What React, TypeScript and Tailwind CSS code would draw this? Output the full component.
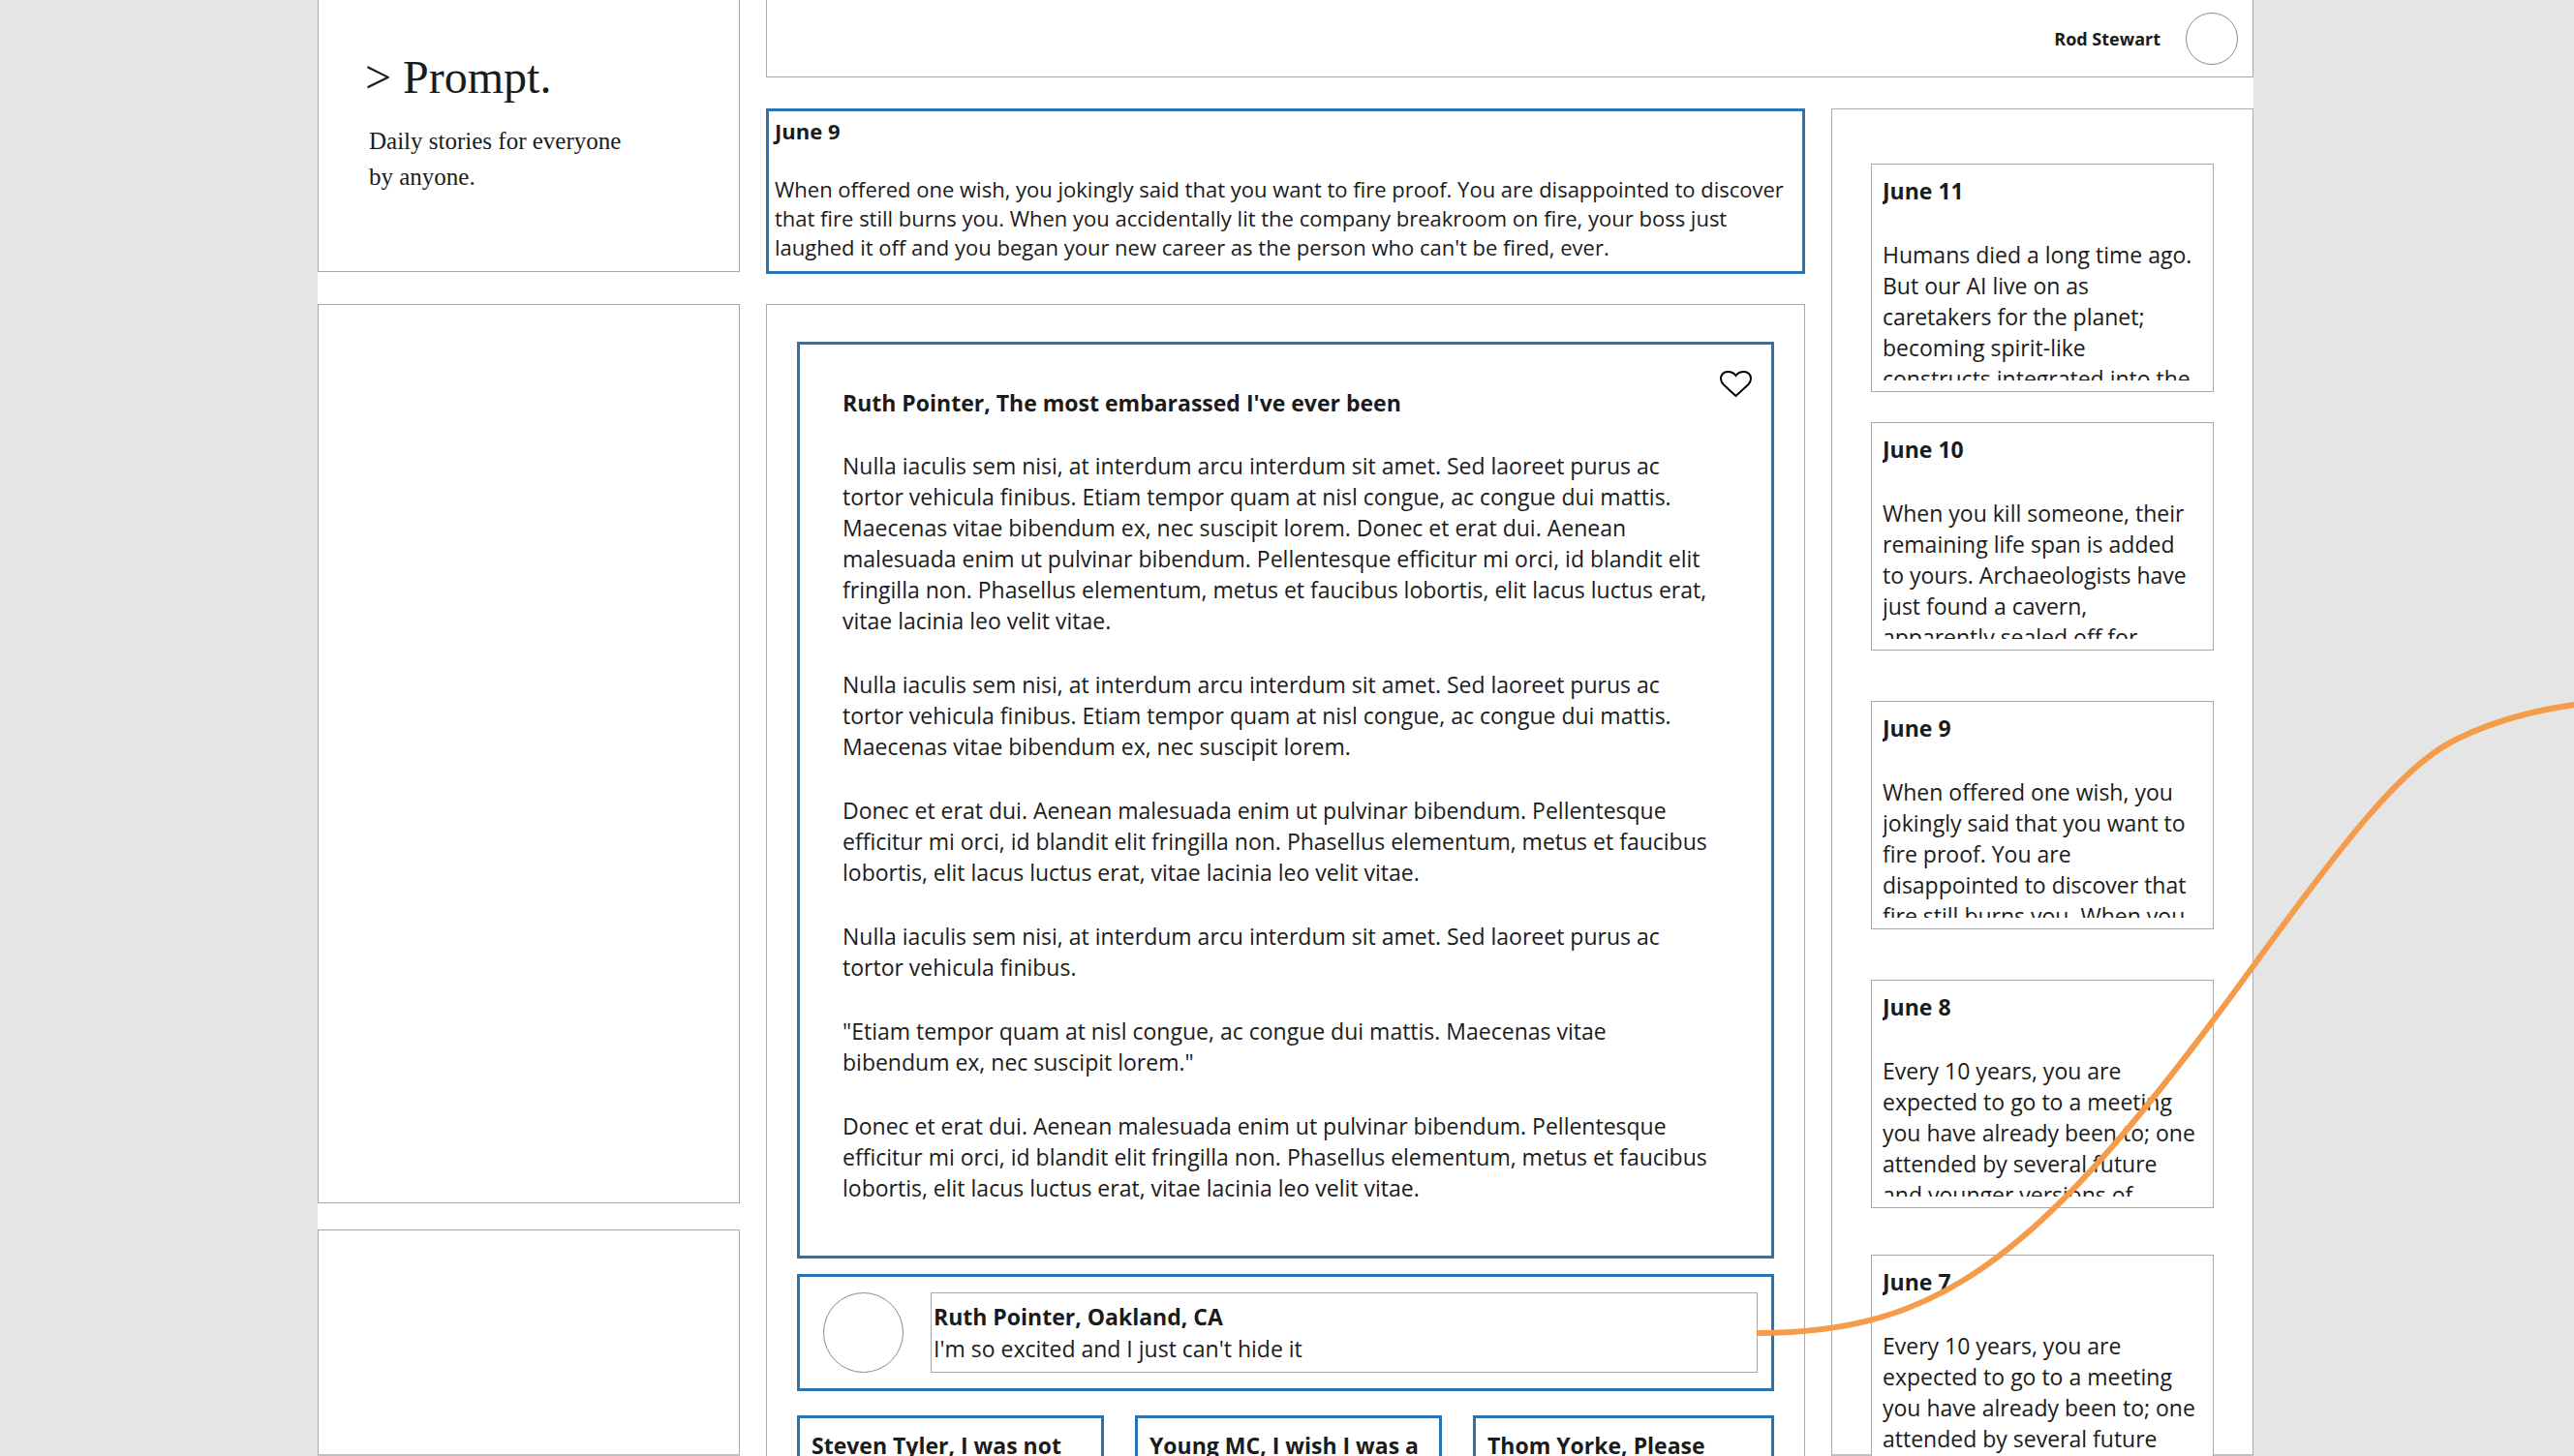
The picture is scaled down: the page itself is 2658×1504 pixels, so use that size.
import React from "react";

const ipsumA =
  "Nulla iaculis sem nisi, at interdum arcu interdum sit amet. Sed laoreet purus ac tortor vehicula finibus.";
const ipsumB = " Etiam tempor quam at nisl congue, ac congue dui mattis. Maecenas vitae bibendum ex, nec suscipit lorem.";
const ipsumC =
  "Donec et erat dui. Aenean malesuada enim ut pulvinar bibendum. Pellentesque efficitur mi orci, id blandit elit fringilla non. Phasellus elementum, metus et faucibus lobortis, elit lacus luctus erat, vitae lacinia leo velit vitae.";

const storyParagraphs = [
  ipsumA + ipsumB + " " + ipsumC,
  ipsumA + ipsumB,
  ipsumC,
  ipsumA,
  '"Etiam tempor quam at nisl congue, ac congue dui mattis. Maecenas vitae bibendum ex, nec suscipit lorem."',
  ipsumC,
];

const todaysPrompt =
  "When offered one wish, you jokingly said that you want to fire proof. You are disappointed to discover that fire still burns you. When you accidentally lit the company breakroom on fire, your boss just laughed it off and you began your new career as the person who can't be fired, ever.";
const meetingPrompt =
  "Every 10 years, you are expected to go to a meeting you have already been to; one attended by several future and younger versions of";

const archive = [
  {
    date: "June 11",
    spacing: "mt-14",
    text: "Humans died a long time ago. But our AI live on as caretakers for the planet; becoming spirit-like constructs integrated into the",
  },
  {
    date: "June 10",
    spacing: "mt-[31px]",
    text: "When you kill someone, their remaining life span is added to yours. Archaeologists have just found a cavern, apparently sealed off for",
  },
  {
    date: "June 9",
    spacing: "mt-13",
    text: "When offered one wish, you jokingly said that you want to fire proof. You are disappointed to discover that fire still burns you. When you",
  },
  { date: "June 8", spacing: "mt-13", text: meetingPrompt },
  { date: "June 7", spacing: "mt-12", text: meetingPrompt },
];

const moreStories = ["Steven Tyler, I was not", "Young MC, I wish I was a", "Thom Yorke, Please"];

function Sidebar() {
  return (
    <aside className="min-h-0 border border-b-2 border-[#adadad] border-b-[#c0c0c0] px-10" aria-label="Earlier prompts">
      {archive.map((item) => (
        <article
          key={item.date}
          className={`h-[236px] border border-[#a8a8a8] bg-white py-[11px] pr-4 pl-[11px] ${item.spacing}`}
        >
          <div className="h-full overflow-hidden text-[23px]/[32px]">
            <h3 className="mb-[34px] font-bold">{item.date}</h3>
            <p>{item.text}</p>
          </div>
        </article>
      ))}
    </aside>
  );
}

function Connector() {
  return (
    <svg
      className="pointer-events-none absolute bottom-1/2 left-full z-10 overflow-visible"
      width="843"
      height="649"
      viewBox="0 0 843 649"
      fill="none"
      aria-hidden="true"
    >
      <path
        d="M0 649C190 649 293 573 512 271C607 140 665 66 718 38C753 20 794 7 845 0"
        stroke="#f59c4a"
        strokeWidth="6"
      />
    </svg>
  );
}

function Story() {
  return (
    <article className="relative border-3 border-[#2b74b0] pt-11 pr-15 pb-[54px] pl-11 text-[23px]/[32px]">
      <button type="button" aria-label="Like this story" className="absolute top-5 right-4 size-[42px]">
        <svg viewBox="0 0 42 42" className="size-full" fill="none" stroke="#000" strokeWidth="2" aria-hidden="true">
          <path d="M21.500 33L9 21.500C7 19.500 6 17.500 6 15C6 11 9 8 13 8C17 8 19.500 9 21.500 12C23.500 9 26 8 30 8C34 8 37 11 37 15C37 17.500 36 19.500 34 21.500Z" />
        </svg>
      </button>
      <h2 className="mb-[33px] font-bold">Ruth Pointer, The most embarassed I've ever been</h2>
      <div className="flex flex-col gap-[34px]">
        {storyParagraphs.map((text, i) => (
          <p key={i}>{text}</p>
        ))}
      </div>
    </article>
  );
}

export default function App() {
  return (
    <div className="h-screen overflow-hidden bg-[#e5e5e5] pr-[331px] pl-[328px] font-['Open_Sans',sans-serif] text-[#1b1b1b]">
      <div className="grid h-full grid-cols-[436px_minmax(0,1fr)] gap-x-[27px] bg-white">
        <div className="flex min-h-0 flex-col">
          <header className="h-[281px] border border-t-0 border-[#a8a8a8] px-12 pt-[52px] font-['Liberation_Serif',serif]">
            <h1 className="text-5xl/[56px]">&gt; Prompt.</h1>
            <p className="mt-[19px] pl-1 text-[25px]/[37px]">
              Daily stories for everyone
              <br />
              by anyone.
            </p>
          </header>
          <div className="mt-[33px] flex-1 border border-[#a8a8a8]" />
          <div className="mt-[27px] h-[234px] border border-b-2 border-[#a8a8a8] border-b-[#c0c0c0]" />
        </div>

        <div className="flex min-h-0 flex-col">
          <div className="flex h-20 items-center justify-end gap-[26px] border border-t-0 border-[#a8a8a8] pr-[15px]">
            <span className="text-lg font-bold">Rod Stewart</span>
            <span className="size-[54px] rounded-full border border-[#8a8a8a]" />
          </div>

          <div className="mt-8 grid min-h-0 flex-1 grid-cols-[minmax(0,1fr)_436px] gap-x-[27px]">
            <main className="flex min-h-0 flex-col">
              <section className="border-3 border-[#2b74b0] px-1.5 pt-[5px] pb-2.5 text-[22px]/[30px]">
                <h2 className="mb-[30px] font-bold">June 9</h2>
                <p>{todaysPrompt}</p>
              </section>

              <section className="mt-[31px] flex-1 border border-b-0 border-[#a8a8a8] px-[31px] pt-[38px]">
                <Story />

                <section className="mt-4 flex gap-7 border-3 border-[#2b74b0] py-4 pr-3.5 pl-6">
                  <span className="size-[83px] shrink-0 rounded-full border border-[#8a8a8a]" />
                  <div className="relative h-[83px] flex-1 border border-[#a8a8a8] pt-2 pl-0.5 text-[23px]/[33px]">
                    <h3 className="font-bold">Ruth Pointer, Oakland, CA</h3>
                    <p>I'm so excited and I just can't hide it</p>
                    <Connector />
                  </div>
                </section>

                <div className="mt-[25px] grid grid-cols-[317fr_317fr_311fr] gap-8">
                  {moreStories.map((title) => (
                    <article key={title} className="h-60 border-3 border-[#2b74b0] p-3 text-[23px]/[32px]">
                      <h3 className="font-bold">{title}</h3>
                    </article>
                  ))}
                </div>
              </section>
            </main>
            <Sidebar />
          </div>
        </div>
      </div>
    </div>
  );
}
